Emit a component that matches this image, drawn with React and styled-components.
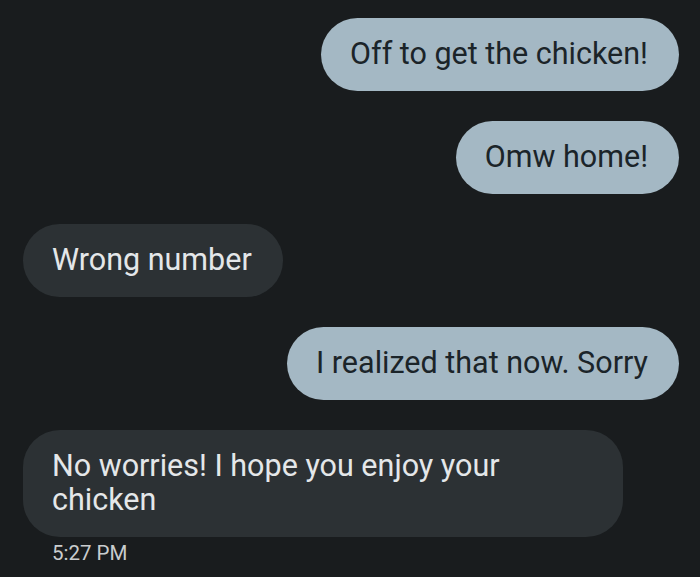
import styled, { createGlobalStyle } from "styled-components";

const GlobalStyle = createGlobalStyle`
  html, body {
    margin: 0;
    padding: 0;
    background: #191c1e;
  }
  body {
    font-family: Roboto, "Noto Sans", "Liberation Sans", sans-serif;
  }
`;

const Thread = styled.div`
  display: flex;
  flex-direction: column;
  gap: 30px;
  padding: 18px 21px 0 23px;
  min-height: 577px;
  box-sizing: border-box;
  background: #191c1e;
`;

const Row = styled.div`
  display: flex;
  flex-direction: column;
  align-items: ${(p) => (p.$mine ? "flex-end" : "flex-start")};
`;

const Bubble = styled.div`
  width: ${(p) => (p.$wide ? "600px" : "auto")};
  max-width: 600px;
  box-sizing: border-box;
  padding: 19px 31px 20px 29px;
  border-radius: 37px;
  font-size: 30.5px;
  line-height: 34px;
  background: ${(p) => (p.$mine ? "#a4b8c4" : "#2c3134")};
  color: ${(p) => (p.$mine ? "#1b2429" : "#e4e7e9")};
`;

const Text = styled.span`
  display: block;
  max-width: ${(p) => (p.$wide ? "480px" : "none")};
`;

const Stamp = styled.div`
  margin: 4px 0 0 29px;
  font-size: 20.5px;
  line-height: 24px;
  color: #c9ccce;
`;

const messages = [
  { mine: true, text: "Off to get the chicken!" },
  { mine: true, text: "Omw home!" },
  { mine: false, text: "Wrong number" },
  { mine: true, text: "I realized that now. Sorry" },
  { mine: false, text: "No worries! I hope you enjoy your chicken", time: "5:27 PM", wide: true },
];

export default function App() {
  return (
    <>
      <GlobalStyle />
      <Thread>
        {messages.map((m, i) => (
          <Row key={i} $mine={m.mine}>
            <Bubble $mine={m.mine} $wide={m.wide}>
              <Text $wide={m.wide}>{m.text}</Text>
            </Bubble>
            {m.time && <Stamp>{m.time}</Stamp>}
          </Row>
        ))}
      </Thread>
    </>
  );
}
